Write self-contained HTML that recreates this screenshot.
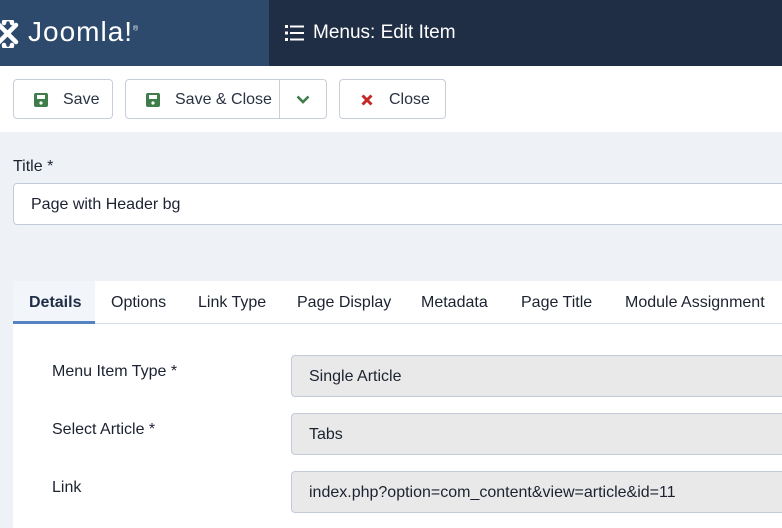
<!DOCTYPE html>
<html><head><style>
*{margin:0;padding:0;box-sizing:border-box}
body{width:782px;height:528px;overflow:hidden;background:#eef2f7;font-family:"Liberation Sans",sans-serif;position:relative;color:#1c2230}
.hdr{position:absolute;top:0;left:0;width:782px;height:66px;background:#1f2d45}
.logo{position:absolute;left:0;top:0;width:269px;height:66px;background:#2d4a6d;color:#fff;font-size:28px}
.tb{position:absolute;top:66px;left:0;width:782px;height:66px;background:#fff}
.btn{position:absolute;top:13px;height:40px;border:1px solid #c8ced8;border-radius:4px;background:#fff;font-size:16px;color:#2a3340;display:flex;align-items:center;padding-top:2px}
.ab{position:absolute;font-size:16px}
.inp{position:absolute;border:1px solid #c3cbd8;border-radius:4px;font-size:16px;padding-left:17px;display:flex;align-items:center;padding-top:2px}
.tabs{position:absolute;left:13px;top:281px;width:769px;height:247px;background:#fff}
.tr{height:43px;border-bottom:1px solid #d8dee8;position:relative;font-size:16px}
.tr span{position:absolute;top:13px}
</style></head><body>
<div class="hdr">
<div class="logo">
<svg style="position:absolute;left:-4px;top:20px" width="26" height="28" viewBox="0 0 26 28"><g stroke="#fff" stroke-width="4.5" fill="none" stroke-linecap="round"><path d="M3 5 L20 22"/><path d="M20 5 L3 22"/><path d="M8 3 A4 4 0 0 1 16 3"/><path d="M8 25 A4 4 0 0 0 16 25"/></g></svg>
<span style="position:absolute;left:28px;top:16px;letter-spacing:1px">Joomla!<sup style="font-size:7px">®</sup></span></div>
<svg style="position:absolute;left:285px;top:25px" width="19" height="16" viewBox="0 0 19 16" fill="#fff"><rect x="0" y="0" width="3" height="3"/><rect x="0" y="6.5" width="3" height="3"/><rect x="0" y="13" width="3" height="3"/><rect x="5" y="0.5" width="14" height="2"/><rect x="5" y="7" width="14" height="2"/><rect x="5" y="13.5" width="14" height="2"/></svg>
<span style="position:absolute;left:313px;top:22px;color:#fff;font-size:19px">Menus: Edit Item</span>
</div>
<div class="tb">
<div class="btn" style="left:13px;width:100px"><svg style="margin-left:20px" width="14" height="14" viewBox="0 0 14 14"><rect width="14" height="14" rx="2" fill="#3e7d4a"/><rect x="3" y="2" width="8" height="4" fill="#fff"/><circle cx="7" cy="10" r="1.6" fill="#fff"/></svg><span style="margin-left:15px">Save</span></div>
<div class="btn" style="left:125px;width:202px"><svg style="margin-left:20px" width="14" height="14" viewBox="0 0 14 14"><rect width="14" height="14" rx="2" fill="#3e7d4a"/><rect x="3" y="2" width="8" height="4" fill="#fff"/><circle cx="7" cy="10" r="1.6" fill="#fff"/></svg><span style="margin-left:15px">Save &amp; Close</span>
<div style="position:absolute;left:153px;top:0;height:38px;border-left:1px solid #c8ced8;width:47px"><svg style="position:absolute;left:16px;top:15px" width="14" height="9" viewBox="0 0 14 9"><path d="M1.5 1.5 L7 7 L12.5 1.5" stroke="#3e7d4a" stroke-width="2.6" fill="none"/></svg></div></div>
<div class="btn" style="left:339px;width:107px"><svg style="margin-left:21px" width="12" height="12" viewBox="0 0 12 12"><path d="M1.5 1.5 L10.5 10.5 M10.5 1.5 L1.5 10.5" stroke="#c62828" stroke-width="3"/></svg><span style="margin-left:16px">Close</span></div>
</div>
<div class="ab" style="left:13px;top:158px">Title *</div>
<div class="inp" style="left:13px;top:183px;width:780px;height:42px;background:#fff">Page with Header bg</div>
<div class="tabs">
<div class="tr">
<div style="position:absolute;left:0;top:0;width:82px;height:43px;background:#f2f5f9;border-bottom:3px solid #5582c0"></div>
<span style="left:16px;font-weight:bold;color:#1f2d45">Details</span>
<span style="left:98px">Options</span>
<span style="left:185px">Link Type</span>
<span style="left:284px">Page Display</span>
<span style="left:408px">Metadata</span>
<span style="left:508px">Page Title</span>
<span style="left:612px">Module Assignment</span>
</div>
</div>
<div class="ab" style="left:52px;top:363px">Menu Item Type *</div>
<div class="inp" style="left:291px;top:355px;width:500px;height:42px;background:#e9e9e9">Single Article</div>
<div class="ab" style="left:52px;top:421px">Select Article *</div>
<div class="inp" style="left:291px;top:413px;width:500px;height:42px;background:#e9e9e9">Tabs</div>
<div class="ab" style="left:52px;top:479px">Link</div>
<div class="inp" style="left:291px;top:471px;width:500px;height:42px;background:#e9e9e9">index.php?option=com_content&amp;view=article&amp;id=11</div>
</body></html>
